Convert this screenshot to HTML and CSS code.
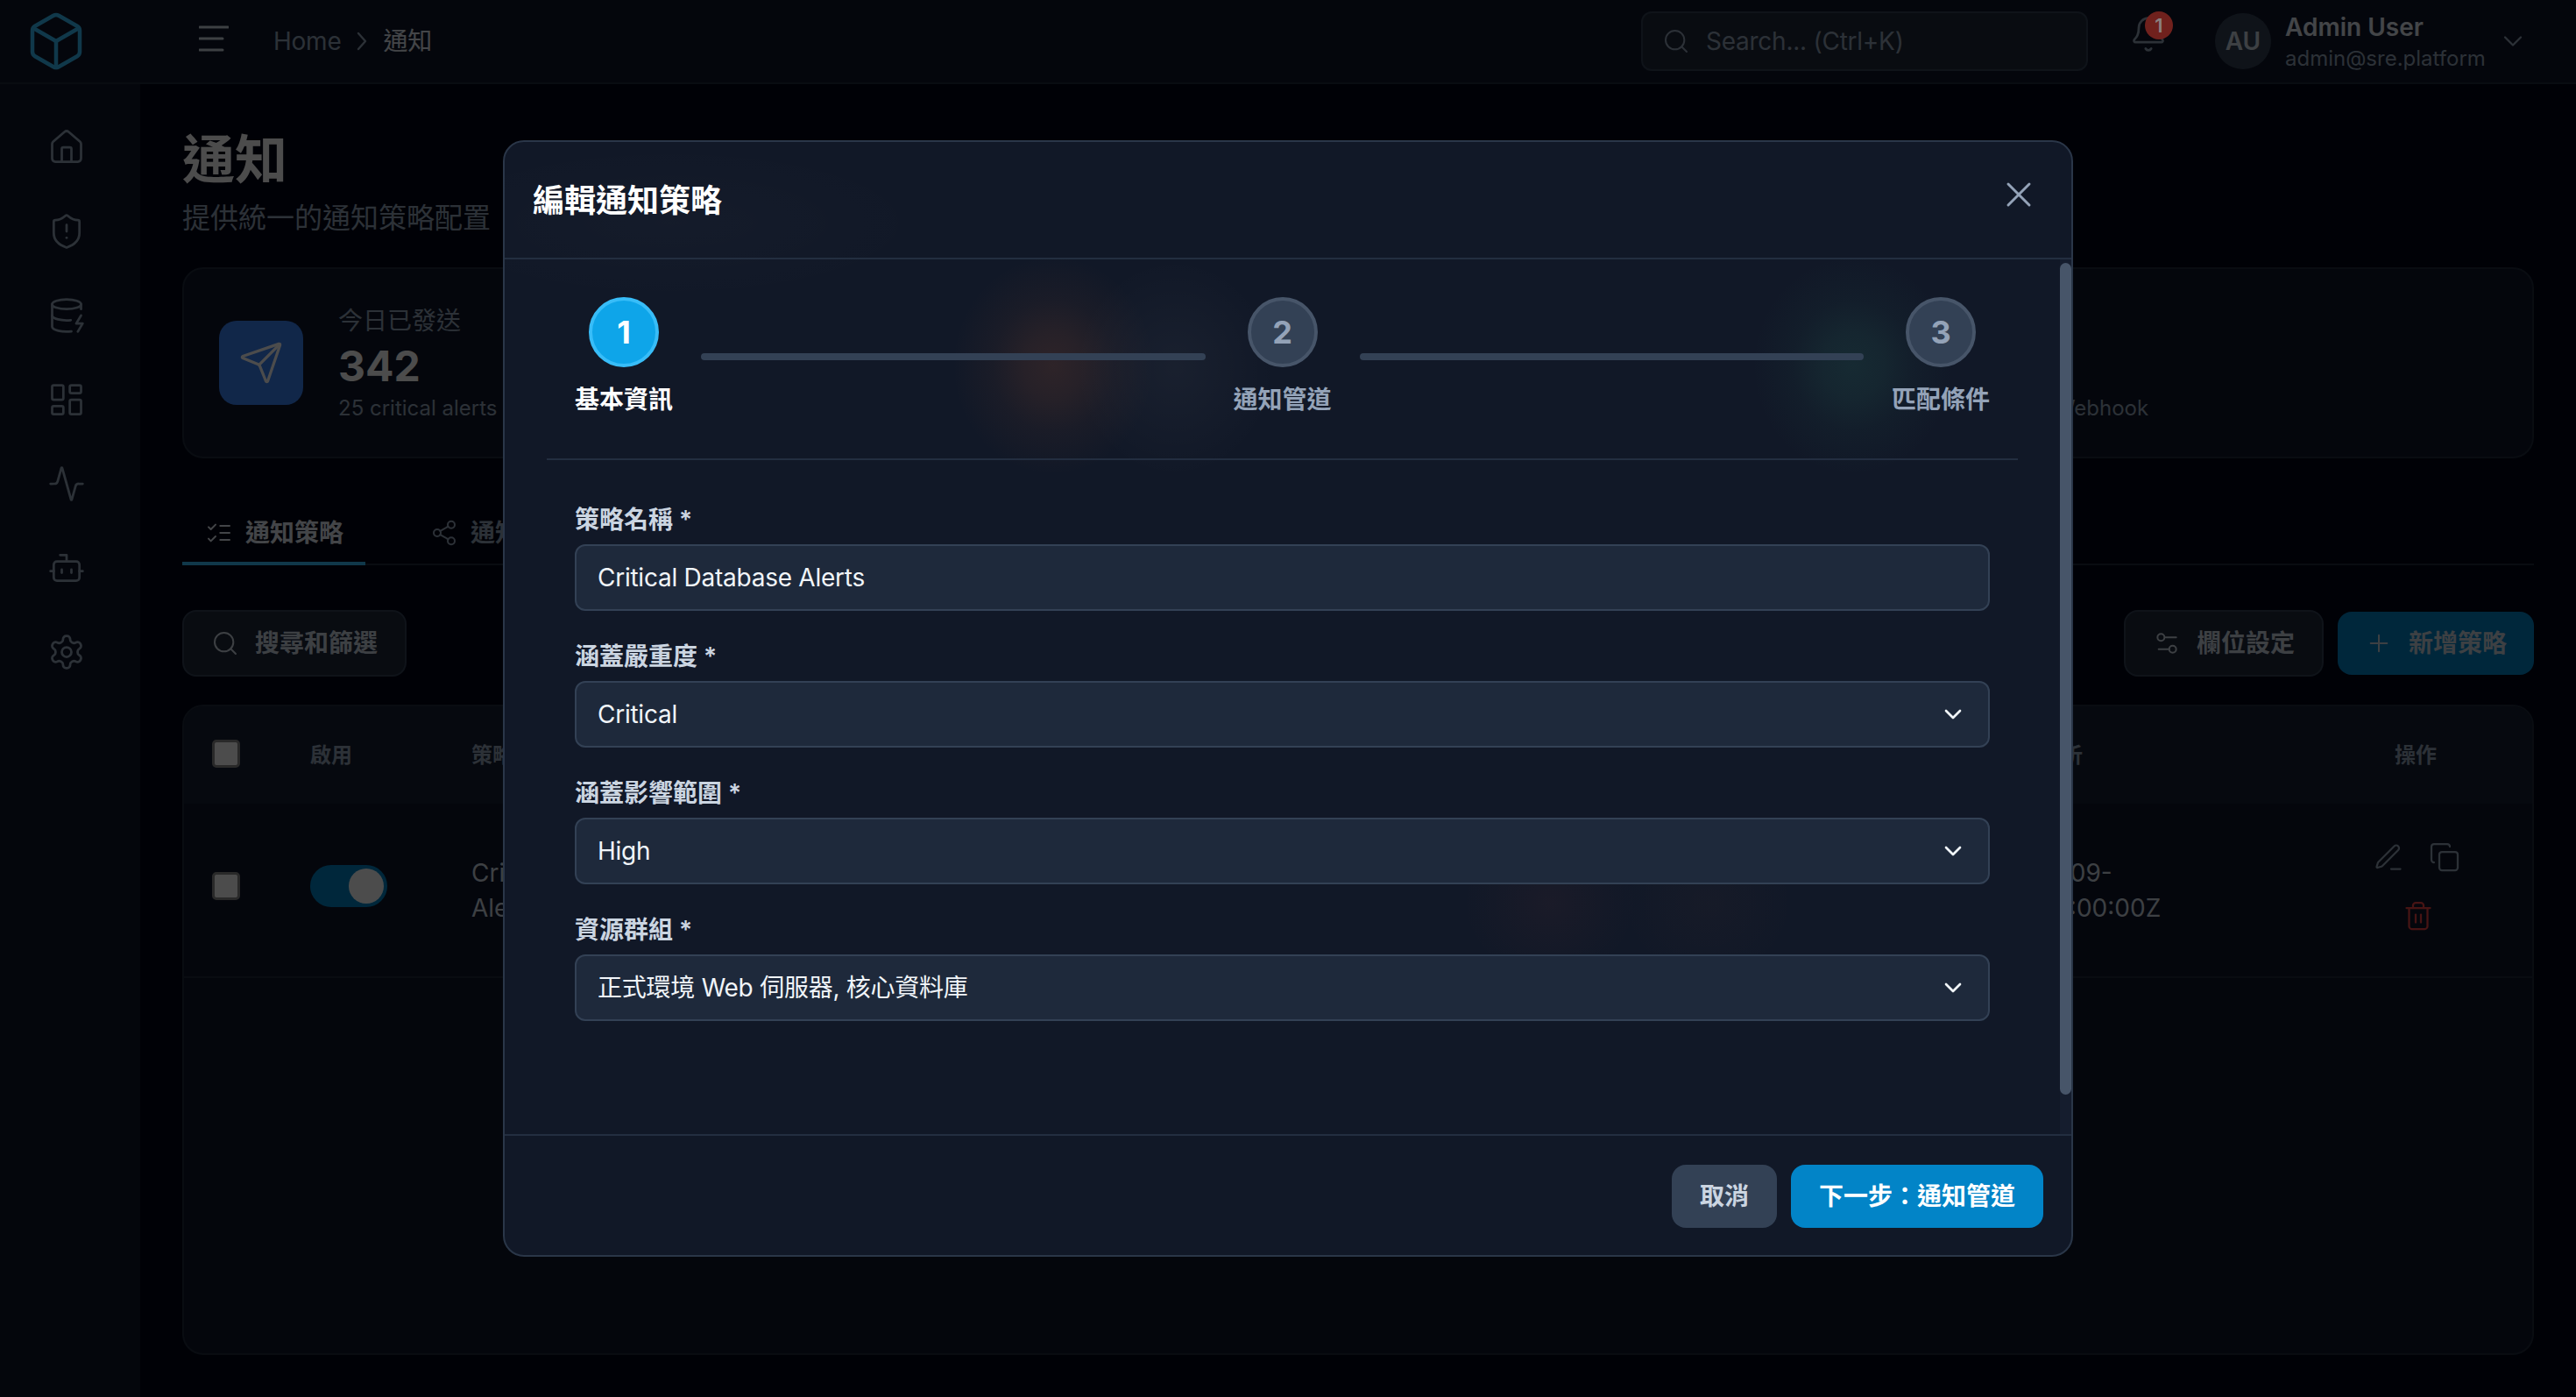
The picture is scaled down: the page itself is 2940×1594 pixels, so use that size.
FILE: index.html
```html
<!DOCTYPE html>
<html lang="zh-Hant">
<head>
<meta charset="utf-8">
<title>通知</title>
<link rel="stylesheet" href="styles.css">
</head>
<body>
<svg class="sprite" xmlns="http://www.w3.org/2000/svg" aria-hidden="true">
  <symbol id="i-box" viewBox="0 0 24 24"><path d="M21 8a2 2 0 0 0-1-1.73l-7-4a2 2 0 0 0-2 0l-7 4A2 2 0 0 0 3 8v8a2 2 0 0 0 1 1.73l7 4a2 2 0 0 0 2 0l7-4A2 2 0 0 0 21 16Z"/><path d="m3.3 7 8.7 5 8.7-5"/><path d="M12 22V12"/></symbol>
  <symbol id="i-home" viewBox="0 0 24 24"><path d="M15 21v-8a1 1 0 0 0-1-1h-4a1 1 0 0 0-1 1v8"/><path d="M3 10a2 2 0 0 1 .709-1.528l7-5.999a2 2 0 0 1 2.582 0l7 5.999A2 2 0 0 1 21 10v9a2 2 0 0 1-2 2H5a2 2 0 0 1-2-2z"/></symbol>
  <symbol id="i-shield" viewBox="0 0 24 24"><path d="M20 13c0 5-3.5 7.5-7.66 8.95a1 1 0 0 1-.67-.01C7.5 20.5 4 18 4 13V6a1 1 0 0 1 1-1c2 0 4.5-1.2 6.24-2.72a1.17 1.17 0 0 1 1.52 0C14.51 3.81 17 5 19 5a1 1 0 0 1 1 1z"/><path d="M12 8v4"/><path d="M12 16h.01"/></symbol>
  <symbol id="i-db" viewBox="0 0 24 24"><ellipse cx="12" cy="5" rx="9" ry="3"/><path d="M3 5V19A9 3 0 0 0 15 21.84"/><path d="M21 5V8"/><path d="M21 12L18 17H22L19 22"/><path d="M3 12A9 3 0 0 0 14.59 14.87"/></symbol>
  <symbol id="i-grid" viewBox="0 0 24 24"><rect width="7" height="9" x="3" y="3" rx="1"/><rect width="7" height="5" x="14" y="3" rx="1"/><rect width="7" height="9" x="14" y="12" rx="1"/><rect width="7" height="5" x="3" y="16" rx="1"/></symbol>
  <symbol id="i-activity" viewBox="0 0 24 24"><path d="M22 12h-2.48a2 2 0 0 0-1.93 1.46l-2.35 8.36a.25.25 0 0 1-.48 0L9.24 2.18a.25.25 0 0 0-.48 0l-2.35 8.36A2 2 0 0 1 4.49 12H2"/></symbol>
  <symbol id="i-bot" viewBox="0 0 24 24"><path d="M12 8V4H8"/><rect width="16" height="12" x="4" y="8" rx="2"/><path d="M2 14h2"/><path d="M20 14h2"/><path d="M15 13v2"/><path d="M9 13v2"/></symbol>
  <symbol id="i-gear" viewBox="0 0 24 24"><path d="M12.22 2h-.44a2 2 0 0 0-2 2v.18a2 2 0 0 1-1 1.73l-.43.25a2 2 0 0 1-2 0l-.15-.08a2 2 0 0 0-2.73.73l-.22.38a2 2 0 0 0 .73 2.73l.15.1a2 2 0 0 1 1 1.72v.51a2 2 0 0 1-1 1.74l-.15.09a2 2 0 0 0-.73 2.73l.22.38a2 2 0 0 0 2.73.73l.15-.08a2 2 0 0 1 2 0l.43.25a2 2 0 0 1 1 1.73V20a2 2 0 0 0 2 2h.44a2 2 0 0 0 2-2v-.18a2 2 0 0 1 1-1.73l.43-.25a2 2 0 0 1 2 0l.15.08a2 2 0 0 0 2.73-.73l.22-.39a2 2 0 0 0-.73-2.73l-.15-.08a2 2 0 0 1-1-1.74v-.5a2 2 0 0 1 1-1.74l.15-.09a2 2 0 0 0 .73-2.73l-.22-.38a2 2 0 0 0-2.73-.73l-.15.08a2 2 0 0 1-2 0l-.43-.25a2 2 0 0 1-1-1.73V4a2 2 0 0 0-2-2z"/><circle cx="12" cy="12" r="3"/></symbol>
  <symbol id="i-send" viewBox="0 0 24 24"><path d="M14.536 21.686a.5.5 0 0 0 .937-.024l6.5-19a.496.496 0 0 0-.635-.635l-19 6.5a.5.5 0 0 0-.024.937l7.93 3.18a2 2 0 0 1 1.112 1.11z"/><path d="m21.854 2.147-10.94 10.939"/></symbol>
  <symbol id="i-list" viewBox="0 0 24 24"><path d="m3 17 2 2 4-4"/><path d="m3 7 2 2 4-4"/><path d="M13 6h8"/><path d="M13 12h8"/><path d="M13 18h8"/></symbol>
  <symbol id="i-share" viewBox="0 0 24 24"><circle cx="18" cy="5" r="3"/><circle cx="6" cy="12" r="3"/><circle cx="18" cy="19" r="3"/><path d="M8.59 13.51l6.83 3.98"/><path d="M15.41 6.51l-6.82 3.98"/></symbol>
  <symbol id="i-search" viewBox="0 0 24 24"><circle cx="11" cy="11" r="8"/><path d="m21 21-4.3-4.3"/></symbol>
  <symbol id="i-bell" viewBox="0 0 24 24"><path d="M10.268 21a2 2 0 0 0 3.464 0"/><path d="M3.262 15.326A1 1 0 0 0 4 17h16a1 1 0 0 0 .74-1.673C19.41 13.956 18 12.499 18 8A6 6 0 0 0 6 8c0 4.499-1.411 5.956-2.738 7.326"/></symbol>
  <symbol id="i-down" viewBox="0 0 24 24"><path d="m6 9 6 6 6-6"/></symbol>
  <symbol id="i-x" viewBox="0 0 24 24"><path d="M18 6 6 18"/><path d="m6 6 12 12"/></symbol>
  <symbol id="i-sliders" viewBox="0 0 24 24"><path d="M20 7h-9"/><path d="M14 17H5"/><circle cx="17" cy="17" r="3"/><circle cx="7" cy="7" r="3"/></symbol>
  <symbol id="i-plus" viewBox="0 0 24 24"><path d="M5 12h14"/><path d="M12 5v14"/></symbol>
  <symbol id="i-pen" viewBox="0 0 24 24"><path d="M14 21h7"/><path d="M16.376 3.622a1 1 0 0 1 3.002 3.002L7.368 18.635a2 2 0 0 1-.855.506l-2.872.838a.5.5 0 0 1-.62-.62l.838-2.872a2 2 0 0 1 .506-.854z"/></symbol>
  <symbol id="i-copy" viewBox="0 0 24 24"><rect width="14" height="14" x="8" y="8" rx="2"/><path d="M4 16c-1.1 0-2-.9-2-2V4c0-1.1.9-2 2-2h10c1.1 0 2 .9 2 2"/></symbol>
  <symbol id="i-trash" viewBox="0 0 24 24"><path d="M3 6h18"/><path d="M19 6v14c0 1-1 2-2 2H7c-1 0-2-1-2-2V6"/><path d="M8 6V4c0-1 1-2 2-2h4c1 0 2 1 2 2v2"/><path d="M10 11v6"/><path d="M14 11v6"/></symbol>
  <symbol id="i-menu" viewBox="0 0 34 30"><path d="M1 2h32"/><path d="M1 15h26"/><path d="M1 28h26"/></symbol>
  <symbol id="i-sep" viewBox="0 0 12 22"><path d="M2 2l8 9-8 9"/></symbol>
</svg>

<div class="app">
  <header class="topbar">
    <div class="brand"><svg class="ic logo"><use href="#i-box"/></svg></div>
    <svg class="ic menu"><use href="#i-menu"/></svg>
    <nav class="crumbs"><span>Home</span><svg class="ic crumb-sep"><use href="#i-sep"/></svg><span class="crumb-now">通知</span></nav>
    <div class="global-search"><svg class="ic ic-32"><use href="#i-search"/></svg><span>Search... (Ctrl+K)</span></div>
    <div class="bell"><svg class="ic ic-44"><use href="#i-bell"/></svg><span class="bell-badge">1</span></div>
    <div class="user">
      <span class="avatar">AU</span>
      <div class="user-text"><strong>Admin User</strong><small>admin@sre.platform</small></div>
      <svg class="ic user-chev"><use href="#i-down"/></svg>
    </div>
  </header>

  <div class="shell">
    <aside class="sidebar">
      <svg class="ic ic-44"><use href="#i-home"/></svg>
      <svg class="ic ic-44"><use href="#i-shield"/></svg>
      <svg class="ic ic-44"><use href="#i-db"/></svg>
      <svg class="ic ic-44"><use href="#i-grid"/></svg>
      <svg class="ic ic-44"><use href="#i-activity"/></svg>
      <svg class="ic ic-44"><use href="#i-bot"/></svg>
      <svg class="ic ic-44"><use href="#i-gear"/></svg>
    </aside>

    <main class="main">
      <h1 class="page-title">通知</h1>
      <p class="page-sub">提供統一的通知策略配置</p>

      <section class="stats">
        <div class="stat">
          <span class="stat-icon blue"><svg class="ic stat-svg"><use href="#i-send"/></svg></span>
          <div class="stat-text"><span class="stat-label">今日已發送</span><strong class="stat-num">342</strong><small class="stat-note">25 critical alerts</small></div>
        </div>
        <div class="stat"></div>
        <div class="stat stat-tail">
          <div class="stat-text"><small class="stat-note">Slack, Teams, Webhook</small></div>
        </div>
      </section>

      <div class="tabs">
        <div class="tab active"><svg class="ic ic-32"><use href="#i-list"/></svg><span>通知策略</span></div>
        <div class="tab"><svg class="ic ic-32"><use href="#i-share"/></svg><span>通知管道</span></div>
      </div>

      <div class="toolbar">
        <div class="tool-btn"><svg class="ic ic-32"><use href="#i-search"/></svg><span>搜尋和篩選</span></div>
        <div class="tool-right">
          <div class="tool-btn"><svg class="ic ic-32"><use href="#i-sliders"/></svg><span>欄位設定</span></div>
          <div class="tool-btn primary"><svg class="ic ic-32"><use href="#i-plus"/></svg><span>新增策略</span></div>
        </div>
      </div>

      <section class="table-card">
        <div class="tr thead">
          <span class="cell"><i class="check"></i></span>
          <span class="cell">啟用</span>
          <span class="cell">策略名稱</span>
          <span class="cell"></span>
          <span class="cell">最後分析</span>
          <span class="cell cell-center">操作</span>
        </div>
        <div class="tr tbody">
          <span class="cell"><i class="check"></i></span>
          <span class="cell"><i class="switch"><b class="knob"></b></i></span>
          <span class="cell name">Critical Database<br>Alerts</span>
          <span class="cell"></span>
          <span class="cell date">2025-09-<br>15T00:00:00Z</span>
          <span class="cell cell-center actions">
            <svg class="ic ic-36"><use href="#i-pen"/></svg>
            <svg class="ic ic-36"><use href="#i-copy"/></svg>
            <svg class="ic ic-36 danger"><use href="#i-trash"/></svg>
          </span>
        </div>
      </section>
    </main>
  </div>
</div>

<div class="overlay">
  <div class="modal">
    <div class="modal-head">
      <h2 class="modal-title">編輯通知策略</h2>
      <svg class="ic modal-close"><use href="#i-x"/></svg>
    </div>
    <div class="modal-body">
      <div class="scroll-area">
        <div class="stepper">
          <div class="step current"><span class="step-dot">1</span><span class="step-label">基本資訊</span></div>
          <span class="step-line"></span>
          <div class="step"><span class="step-dot">2</span><span class="step-label">通知管道</span></div>
          <span class="step-line"></span>
          <div class="step"><span class="step-dot">3</span><span class="step-label">匹配條件</span></div>
        </div>
        <div class="form">
          <div class="field"><label class="field-label">策略名稱 *</label><div class="control">Critical Database Alerts</div></div>
          <div class="field"><label class="field-label">涵蓋嚴重度 *</label><div class="control">Critical<svg class="ic select-chev"><use href="#i-down"/></svg></div></div>
          <div class="field"><label class="field-label">涵蓋影響範圍 *</label><div class="control">High<svg class="ic select-chev"><use href="#i-down"/></svg></div></div>
          <div class="field"><label class="field-label">資源群組 *</label><div class="control">正式環境 Web 伺服器, 核心資料庫<svg class="ic select-chev"><use href="#i-down"/></svg></div></div>
        </div>
      </div>
      <div class="scroll-track"><div class="scroll-thumb"></div></div>
    </div>
    <div class="modal-foot">
      <button class="btn btn-muted">取消</button>
      <button class="btn btn-next">下一步：通知管道</button>
    </div>
  </div>
</div>
</body>
</html>
```

FILE: styles.css
```css
* { box-sizing: border-box; }
html, body { margin: 0; padding: 0; }
body {
  width: 2940px; height: 1594px; overflow: hidden; position: relative;
  background: #020617; color: #e2e8f0;
  font-family: Inter, "Noto Sans CJK TC", "Noto Sans CJK SC", sans-serif;
  font-size: 28px; line-height: 40px;
}
.sprite { width: 0; height: 0; position: absolute; }
.ic { fill: none; stroke: currentColor; stroke-width: 1.5; stroke-linecap: round; stroke-linejoin: round; flex: none; display: block; }
.ic-32 { width: 32px; height: 32px; }
.ic-36 { width: 36px; height: 36px; }
.ic-44 { width: 44px; height: 44px; }

/* topbar */
.app { display: flex; flex-direction: column; height: 100%; }
.topbar { height: 96px; flex: none; display: flex; align-items: center; background: #0f172a; border-bottom: 2px solid #1e293b; }
.brand { width: 128px; display: flex; justify-content: center; flex: none; }
.logo { width: 72px; height: 72px; color: #38bdf8; }
.menu { width: 34px; height: 30px; margin: -6px 0 0 99px; color: #cbd5e1; stroke-width: 3; }
.crumbs { display: flex; align-items: center; margin-left: 51px; color: #94a3b8; letter-spacing: -.25px; }
.crumb-sep { width: 12px; height: 22px; margin: 0 18px; stroke-width: 2.4; }
.crumb-now { color: #e2e8f0; }
.global-search { width: 510px; height: 68px; margin-left: auto; display: flex; align-items: center; gap: 18px; padding: 0 22px; background: #1e293b; border: 2px solid #334155; border-radius: 12px; color: #94a3b8; letter-spacing: -.25px; }
.bell { position: relative; margin: -16px 0 0 47px; width: 44px; color: #94a3b8; }
.bell-badge { position: absolute; z-index: 2; left: 18px; top: -4px; width: 32px; height: 32px; border-radius: 50%; background: #70211d; color: #8a8080; font-size: 22px; line-height: 32px; text-align: center; font-weight: 600; }
.user { display: flex; align-items: center; margin-left: 54px; width: 412px; }
.avatar { width: 64px; height: 64px; border-radius: 50%; background: #334155; display: flex; align-items: center; justify-content: center; color: #cbd5e1; font-weight: 600; }
.user-text { margin-left: 16px; padding-top: 4px; display: flex; flex-direction: column; }
.user-text strong { font-weight: 600; line-height: 36px; }
.user-text small { font-size: 24px; line-height: 36px; color: #94a3b8; }
.user-chev { width: 36px; height: 36px; margin-left: auto; margin-right: 54px; color: #94a3b8; }

/* shell */
.shell { flex: 1; display: flex; min-height: 0; }
.sidebar { width: 160px; flex: none; background: #0f172a; display: flex; flex-direction: column; align-items: center; gap: 52px; padding: 50px 8px 0 0; color: #94a3b8; }
.main { flex: 1; padding: 50px 48px 48px; display: flex; flex-direction: column; min-width: 0; }
.page-title { margin: 0; font-size: 60px; line-height: 72px; font-weight: 700; color: #fff; }
.page-sub { margin: 7px 0 0; font-size: 32px; line-height: 48px; color: #94a3b8; }

/* stats */
.stats { margin-top: 32px; height: 218px; flex: none; display: grid; grid-template-columns: 901px 901px 1fr; padding-left: 40px; background: #0f172a; border: 2px solid #1e293b; border-radius: 24px; }
.stat { display: flex; align-items: center; gap: 40px; }
.stat-tail { padding-left: 129px; }
.stat-icon { width: 96px; height: 96px; border-radius: 20px; display: flex; align-items: center; justify-content: center; color: #fff; }
.stat-icon.blue { background: #3b82f6; }
.stat-svg { width: 52px; height: 52px; }
.stat-text { display: flex; flex-direction: column; padding-top: 4px; }
.stat-tail .stat-text { padding-top: 104px; }
.stat-label { color: #94a3b8; line-height: 40px; margin-bottom: 4px; }
.stat-num { font-size: 48px; line-height: 56px; font-weight: 700; color: #fff; }
.stat-note { font-size: 24px; line-height: 40px; color: #94a3b8; }

/* tabs */
.tabs { margin-top: 47px; flex: none; display: flex; height: 75px; gap: 48px; border-bottom: 2px solid #1e293b; }
.tab { display: flex; align-items: center; gap: 14px; padding: 4px 25px 0 26px; margin-bottom: -2px; color: #94a3b8; font-weight: 600; border-bottom: 4px solid transparent; }
.tab.active { border-bottom-color: #38bdf8; color: #e2e8f0; }

/* toolbar */
.toolbar { margin-top: 51px; flex: none; display: flex; justify-content: space-between; align-items: center; height: 76px; }
.tool-right { display: flex; align-items: center; gap: 16px; }
.tool-btn { height: 76px; display: flex; align-items: center; gap: 18px; padding: 0 31px; background: #1e293b; border: 2px solid #334155; border-radius: 16px; font-weight: 600; color: #cbd5e1; }
.tool-btn.primary { background: #0284c7; border: 0; height: 72px; color: #cbd5e1; }

/* table */
.table-card { margin-top: 32px; flex: 1; background: #0f172a; border: 2px solid #1e293b; border-radius: 24px; overflow: hidden; }
.tr { display: grid; grid-template-columns: 112px 184px 562px 1181px 359px 1fr; align-items: center; padding-left: 32px; }
.thead { height: 111px; font-size: 24px; font-weight: 600; color: #94a3b8; background: #172033; }
.tbody { height: 199px; border-bottom: 2px solid #1e293b; color: #cbd5e1; }
.cell-center { text-align: center; padding-right: 16px; }
.check { display: block; width: 32px; height: 32px; background: #fff; border: 3px solid #8a8a8a; border-radius: 5px; }
.thead .check { margin-top: -3px; }
.tbody .check, .switch { margin-top: -9px; }
.switch { display: block; width: 88px; height: 48px; padding: 4px; background: #0284c7; border-radius: 24px; }
.knob { display: block; width: 40px; height: 40px; margin-left: 40px; background: #fff; border-radius: 50%; }
.actions { display: flex; flex-wrap: wrap; justify-content: center; gap: 31px 28px; padding: 0 54px 0 40px; margin-top: -8px; color: #94a3b8; }
.danger { color: #ef4444; margin-left: 4px; }

/* overlay + modal */
.overlay { position: absolute; inset: 0; z-index: 1; display: flex; align-items: center; justify-content: center; background: rgba(0, 0, 0, .7); }
.modal {
  width: 1792px; height: 1274px; display: flex; flex-direction: column;
  background-color: #111827;
  background-image:
    radial-gradient(ellipse 115px 125px at 626px 255px, rgba(255, 120, 50, .12), rgba(255, 120, 50, .09) 30%, rgba(255, 120, 50, .04) 60%, rgba(255, 120, 50, 0)),
    radial-gradient(ellipse 115px 125px at 765px 258px, rgba(255, 255, 255, .035), rgba(255, 255, 255, .025) 35%, rgba(255, 255, 255, 0)),
    radial-gradient(ellipse 115px 125px at 1539px 255px, rgba(70, 200, 150, .1), rgba(70, 200, 150, .08) 30%, rgba(70, 200, 150, .03) 60%, rgba(70, 200, 150, 0)),
    radial-gradient(ellipse 100px 90px at 1193px 868px, rgba(255, 90, 70, .04), rgba(255, 90, 70, 0)),
    radial-gradient(ellipse 100px 90px at 1373px 868px, rgba(255, 130, 70, .025), rgba(255, 130, 70, 0)),
    radial-gradient(ellipse 300px 90px at 190px 92px, rgba(255, 255, 255, .015), rgba(255, 255, 255, 0));
  border: 2px solid #2a3648; border-radius: 24px; overflow: hidden;
}
.modal-head { height: 134px; flex: none; display: flex; justify-content: space-between; align-items: flex-start; padding: 43px 36px 0 32px; border-bottom: 2px solid #232e40; }
.modal-title { margin: 0; font-size: 36px; line-height: 48px; font-weight: 700; color: #fff; }
.modal-close { width: 48px; height: 48px; margin-top: -7px; color: #94a3b8; }
.modal-body { flex: 1; display: flex; min-height: 0; }
.scroll-area { flex: 1; padding: 43px 48px 0; min-width: 0; }
.scroll-track { width: 13px; flex: none; padding-top: 4px; background: rgba(30, 41, 59, .35); }
.scroll-thumb { height: 949px; background: #475569; border-radius: 7px; }
.stepper { display: flex; padding: 0 32px 47px; border-bottom: 2px solid #232e40; }
.step { width: 112px; flex: none; display: flex; flex-direction: column; align-items: center; gap: 17px; color: #94a3b8; }
.step-dot { width: 80px; height: 80px; border-radius: 50%; display: flex; align-items: center; justify-content: center; background: #334155; border: 4px solid #475569; font-size: 36px; font-weight: 700; }
.step-label { font-weight: 600; white-space: nowrap; }
.step.current { color: #fff; }
.step.current .step-dot { background: #0ea5e9; border-color: #38bdf8; }
.step-line { flex: 1; height: 8px; margin: 64px 32px 0; background: #334155; border-radius: 4px; }
.form { padding: 48px 32px 0; display: flex; flex-direction: column; gap: 32px; }
.field-label { display: block; margin-bottom: 8px; font-weight: 600; color: #cbd5e1; }
.control { height: 76px; display: flex; align-items: center; justify-content: space-between; padding: 0 24px; background: #1e293b; border: 2px solid #334155; border-radius: 12px; color: #f1f5f9; letter-spacing: -.25px; }
.select-chev { width: 32px; height: 32px; color: #f1f5f9; stroke-width: 2; }
.modal-foot { height: 138px; flex: none; display: flex; justify-content: flex-end; gap: 16px; padding: 33px 32px 0; border-top: 2px solid #232e40; }
.btn { height: 72px; padding: 0; border: 0; border-radius: 16px; font: inherit; font-weight: 600; }
.btn-muted { width: 120px; background: #334155; color: #cbd5e1; }
.btn-next { width: 288px; background: #0284c7; color: #fff; }
```
